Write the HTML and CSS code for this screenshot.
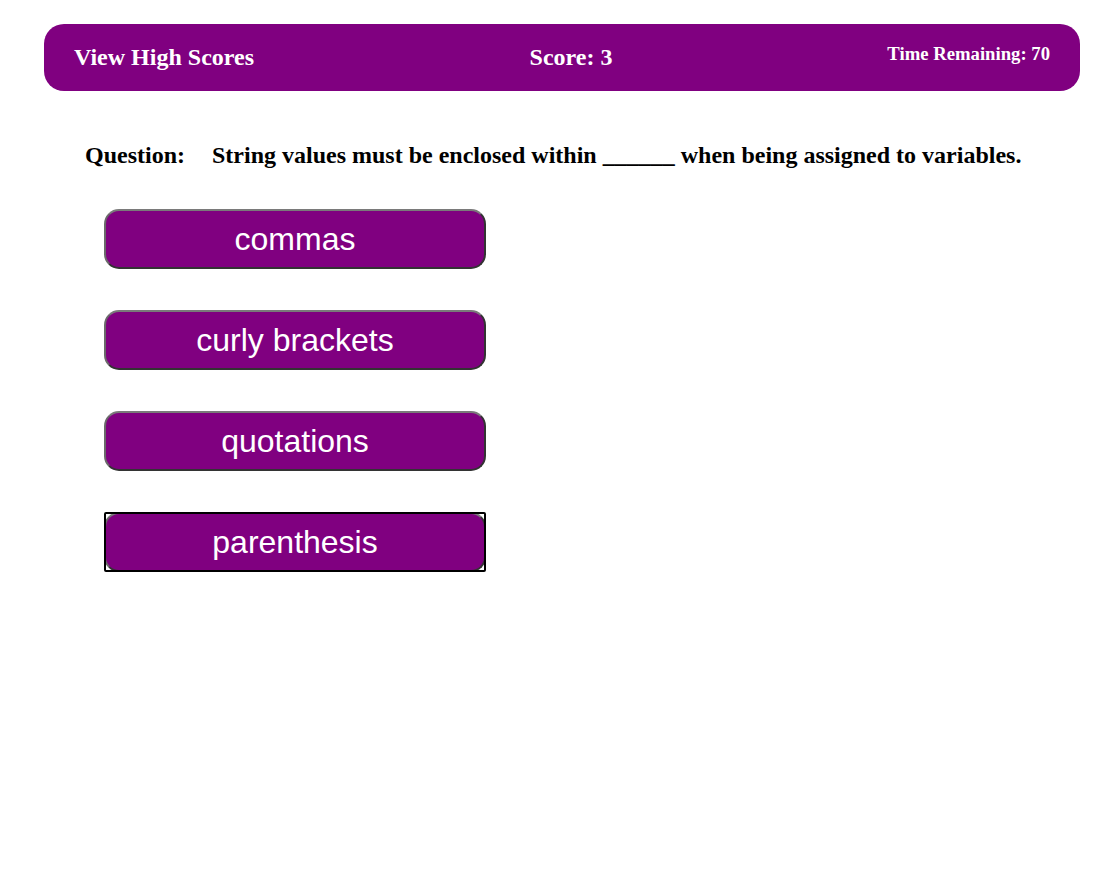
FILE: index.html
```html
<!DOCTYPE html>
<html>
<head>
<meta charset="utf-8">
<link rel="stylesheet" href="styles.css">
</head>
<body>
<header class="topbar">
  <div class="hs">View High Scores</div>
  <div class="score">Score: 3</div>
  <div class="timer">Time Remaining: 70</div>
</header>
<main class="quiz">
  <div class="question">
    <span class="qlabel">Question:</span>
    <span class="qtext">String values must be enclosed within ______ when being assigned to variables.</span>
  </div>
  <div class="answers">
    <button class="answer">commas</button>
    <button class="answer">curly brackets</button>
    <button class="answer">quotations</button>
    <button class="answer focused">parenthesis</button>
  </div>
</main>
</body>
</html>
```
FILE: styles.css
```css
html, body {
  margin: 0;
  padding: 0;
  background: #fff;
}
body {
  font-family: "Liberation Serif", "Times New Roman", serif;
  color: #000;
}
.topbar {
  margin: 24px 35px 0 44px;
  height: 67px;
  box-sizing: border-box;
  background: #800080;
  border-radius: 20px;
  color: #fff;
  font-weight: bold;
  display: grid;
  grid-template-columns: 1fr auto 1fr;
  align-items: start;
  padding: 0 30px;
}
.hs {
  font-size: 24px;
  line-height: 28px;
  padding-top: 19px;
}
.score {
  font-size: 24px;
  line-height: 28px;
  padding-top: 19px;
  padding-left: 18px;
}
.timer {
  font-size: 18.7px;
  line-height: 22px;
  padding-top: 19px;
  justify-self: end;
}
.quiz {
  padding: 51px 0 0 85px;
}
.question {
  font-size: 24px;
  font-weight: bold;
  display: flex;
  gap: 27px;
  line-height: 26px;
}
.answers {
  display: flex;
  flex-direction: column;
  align-items: flex-start;
  gap: 41px;
  margin-top: 41px;
  margin-left: 19px;
}
.answer {
  position: relative;
  width: 382px;
  height: 60px;
  box-sizing: border-box;
  background: #800080;
  color: #fff;
  font-family: "Liberation Sans", Arial, sans-serif;
  font-size: 32px;
  border: 2px solid #333;
  border-top-color: #7a7a7a;
  border-left-color: #6a6a6a;
  border-radius: 15px;
  padding: 0;
  margin: 0;
}
.answer.focused::after {
  content: "";
  position: absolute;
  inset: -2px;
  border: 2px solid #000;
  border-radius: 2px;
}
```
